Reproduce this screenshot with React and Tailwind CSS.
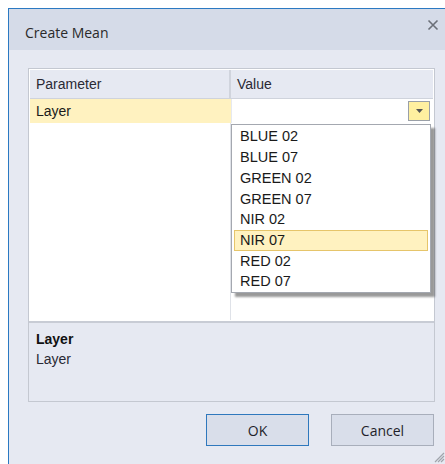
import { useState } from 'react'

const bands = ['BLUE 02', 'BLUE 07', 'GREEN 02', 'GREEN 07', 'NIR 02', 'NIR 07', 'RED 02', 'RED 07']

const uiFont = { fontFamily: '"Open Sans", "Noto Sans", sans-serif' }
const gridFont = { fontFamily: '"Liberation Sans", Arial, sans-serif' }

function LayerDropdown({ selected, onPick }) {
  return (
    <div className="absolute left-[202px] top-[55px] w-[200px] h-[169px] bg-white border border-[#a4a8b0] shadow-[4px_4px_2px_rgba(0,0,0,0.4)] pt-[2px] px-[2px]">
      {bands.map(b => (
        <div
          key={b}
          onClick={() => onPick(b)}
          className={`h-[20.7px] flex items-center pl-[5px] text-[14.5px] text-[#1a1a1a] ${
            b === selected ? 'bg-[#fff2c0] border border-[#e6c56a]' : 'border border-transparent'
          }`}
        >
          {b}
        </div>
      ))}
    </div>
  )
}

export default function App() {
  const [hovered, setHovered] = useState('NIR 07')

  return (
    <div className="w-[445px] h-[464px] bg-white overflow-hidden pt-[8px] pl-[8px]">
      <div className="h-full flex flex-col border-l border-t border-[#2b79c2] bg-[#e6e9f2]">
        {/* title bar */}
        <div className="h-[41px] shrink-0 bg-[#d5dbe8] flex items-center justify-between pl-[16px] pr-[6px]" style={uiFont}>
          <span className="text-[14px] text-[#2a2a2a] mt-[6px]">Create Mean</span>
          <svg className="w-[12px] h-[12px] mb-[10px]" viewBox="0 0 12 12">
            <path d="M1.5 1.5l9 9M10.5 1.5l-9 9" stroke="#6b6f78" strokeWidth="1.6" fill="none" />
          </svg>
        </div>

        <div className="flex-1 flex flex-col pl-[19px] pt-[18px]">
          {/* property grid */}
          <div className="relative w-[407px] h-[334px] border border-[#c4c8d1] flex flex-col" style={gridFont}>
            <div className="flex-1 flex flex-col border border-white bg-white">
              <div className="h-[29px] flex bg-[#e6e9f2] border-b border-[#cfd3dc]">
                <div className="w-[201px] border-r-2 border-[#d0d4dd] flex items-center pl-[6px] text-[14px] text-[#2a2a35]">Parameter</div>
                <div className="flex-1 flex items-center pl-[6px] text-[14px] text-[#2a2a35]">Value</div>
              </div>
              <div className="h-[24px] flex">
                <div className="w-[201px] bg-[#fff2c0] flex items-center pl-[6px] text-[14px] text-[#1a1a1a]">Layer</div>
                <div className="flex-1 flex items-center justify-end pr-[3px] border-l border-[#e6e9f0]">
                  <div className="w-[22px] h-[20px] bg-[#fff0a0] border border-[#9aa0a8] flex items-center justify-center">
                    <svg width="7" height="4" viewBox="0 0 7 4"><path d="M0 0h7L3.5 4z" fill="#555" /></svg>
                  </div>
                </div>
              </div>
              <div className="flex-1 flex">
                <div className="w-[201px] border-r border-[#dfe2e8]" />
                <div className="flex-1" />
              </div>
            </div>

            {/* description panel */}
            <div className="h-[80px] border-t-2 border-[#c8ccd5] bg-[#e6e9f2] pl-[7px] pt-[6px]">
              <div className="text-[14px] font-bold text-[#111] leading-[20px]">Layer</div>
              <div className="text-[14px] text-[#2a2a35] leading-[20px]">Layer</div>
            </div>

            <LayerDropdown selected={hovered} onPick={setHovered} />
          </div>

          {/* buttons */}
          <div className="flex justify-end gap-[22px] w-[406px] mt-[12px]" style={uiFont}>
            <button className="w-[103px] h-[32px] bg-[#d9deea] border border-[#2f78bd] text-[14px] text-[#1f1f2a]">OK</button>
            <button className="w-[103px] h-[32px] bg-[#d9deea] border border-[#a8aebb] text-[14px] text-[#1f1f2a]">Cancel</button>
          </div>

          <div className="flex justify-end mt-[5px]">
            <svg width="12" height="12" viewBox="0 0 12 12">
              <path d="M11 2L2 11M11 5L5 11M11 8L8 11" stroke="#a0a4ac" strokeWidth="1.2" />
            </svg>
          </div>
        </div>
      </div>
    </div>
  )
}
